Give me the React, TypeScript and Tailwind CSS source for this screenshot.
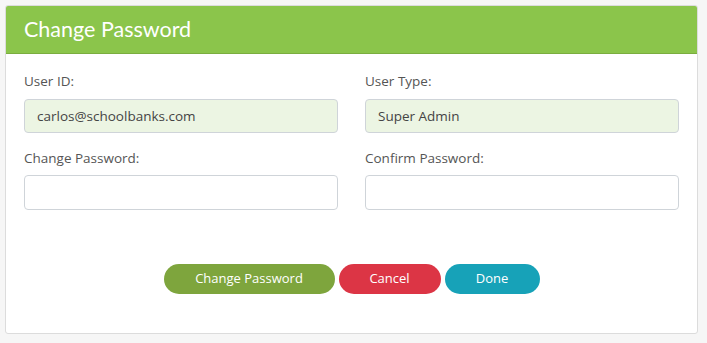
import React from "react";

export default function App() {
  const label = "block text-[13.5px] leading-[20px] text-[#555]";
  const inputBase =
    "w-full h-[34px] rounded-[4px] border border-[#cfd4d9] px-[12px] text-[13.5px] text-[#444] outline-none";
  return (
    <div
      className="w-[707px] h-[343px] bg-[#f6f6f6] p-[5px]"
      style={{ fontFamily: '"Open Sans", "Noto Sans", sans-serif' }}
    >
      <div className="w-[693px] h-[329px] bg-white border border-[#dcdcdc] rounded-[3px] overflow-hidden flex flex-col">
        <div
          className="h-[48px] bg-[#8bc54b] border-b border-[#7aad3f] pl-[18px] pb-[1px] flex items-center text-white text-[21.5px]"
          style={{ fontFamily: 'Lato, "Open Sans", sans-serif' }}
        >
          Change Password
        </div>
        <div className="px-[18px] pt-[17px]">
          <div className="grid grid-cols-2 gap-x-[27px]">
            <div>
              <label className={label}>User ID:</label>
              <input
                className={inputBase + " mt-[8px] bg-[#ecf5e3]"}
                value="carlos@schoolbanks.com"
                readOnly
              />
            </div>
            <div>
              <label className={label}>User Type:</label>
              <input
                className={inputBase + " mt-[8px] bg-[#ecf5e3]"}
                value="Super Admin"
                readOnly
              />
            </div>
            <div className="mt-[15px]">
              <label className={label}>Change Password:</label>
              <input className={inputBase + " mt-[7px] h-[35px] bg-white"} type="password" />
            </div>
            <div className="mt-[15px]">
              <label className={label}>Confirm Password:</label>
              <input className={inputBase + " mt-[7px] h-[35px] bg-white"} type="password" />
            </div>
          </div>
          <div className="mt-[54px] flex justify-center gap-[4px]">
            <button className="h-[30px] w-[171px] rounded-full bg-[#7ea53d] text-white text-[13px]">
              Change Password
            </button>
            <button className="h-[30px] w-[102px] rounded-full bg-[#dc3545] text-white text-[13px]">
              Cancel
            </button>
            <button className="h-[30px] w-[95px] rounded-full bg-[#17a2b8] text-white text-[13px]">
              Done
            </button>
          </div>
        </div>
      </div>
    </div>
  );
}
